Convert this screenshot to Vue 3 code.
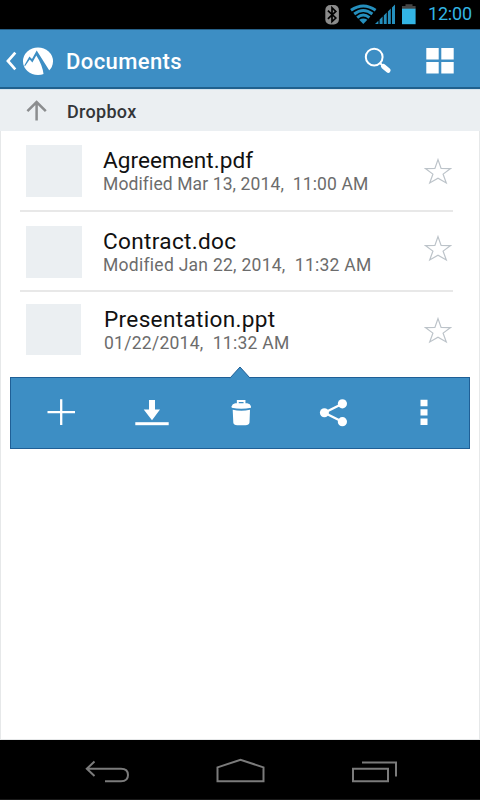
<script setup>
const files = [
  { name: 'Agreement.pdf', detail: 'Modified Mar 13, 2014,\u00a0 11:00 AM', key: 'first' },
  { name: 'Contract.doc', detail: 'Modified Jan 22, 2014,\u00a0 11:32 AM', key: 'second' },
  { name: 'Presentation.ppt', detail: '01/22/2014,\u00a0 11:32 AM', key: 'third' },
]
</script>

<template>
  <div class="phone">
    <div class="status">
      <svg class="status-icons" viewBox="320 0 100 29" width="100" height="29">
        <rect x="325.3" y="5" width="13.6" height="19.4" rx="5" fill="#8b8b8b" />
        <path d="M327.9 10.6 L335.8 18 L332 21.6 V7.8 L335.8 11.4 L327.9 18.8" fill="none" stroke="#000" stroke-width="1.7" />
        <g fill="none" stroke="#258fbd" stroke-width="2.9">
          <path d="M351 10.2 Q363.3 1.6 375.6 10.2" />
          <path d="M354.2 14 Q363.3 6.8 372.4 14" />
          <path d="M357.2 17.6 Q363.3 12.4 369.4 17.6" />
        </g>
        <path d="M359.2 19.8 Q363.3 17 367.4 19.8 L363.3 24Z" fill="#258fbd" />
        <path d="M375 24 L378.4 20.7 V24Z M379.6 24 V19.5 L382.6 16.6 V24Z M383.8 24 V15.4 L386.7 12.6 V24Z M387.9 24 V11.4 L390.8 8.6 V24Z M392 24 V7.4 L395 4.6 V24Z" fill="#258fbd" />
        <path d="M402 9 V6 H405.5 V4.3 H412.5 V6 H415.6 V9Z" fill="#454545" />
        <rect x="402" y="8.7" width="13.6" height="15.5" fill="#33b5e5" />
      </svg>
      <span class="clock">12:00</span>
    </div>

    <header class="header">
      <svg viewBox="0 30 56 57" width="56" height="57">
        <path d="M15.3 52.6 L7.9 61 L15.3 69.4" fill="none" stroke="#fff" stroke-width="2.7" />
        <ellipse cx="38" cy="61.2" rx="15" ry="13.8" fill="#fff" />
        <path d="M24.4 65.3 L29.4 56.6 L32 59 L36.7 50.4 L49.8 71.2 L43.8 75.4 Q42.7 65 36.3 55.4 L32.4 62.6 L29.7 59.6 L24.8 66.5Z" fill="#3d8ec4" />
      </svg>
      <h1 class="heading">Documents</h1>
      <svg class="header-actions" viewBox="355 30 110 57" width="110" height="57">
        <circle cx="374.2" cy="57.1" r="8.4" fill="none" stroke="#fff" stroke-width="2" />
        <path d="M380 63 L384 67" stroke="#fff" stroke-width="2" />
        <path d="M383.4 66.4 L388.2 70.4" stroke="#fff" stroke-width="4.8" stroke-linecap="round" />
        <path d="M426.3 48 H438.7 V59.5 H426.3Z M441.3 48 H453.7 V59.5 H441.3Z M426.3 62 H438.7 V73.5 H426.3Z M441.3 62 H453.7 V73.5 H441.3Z" fill="#fff" />
      </svg>
    </header>

    <div class="crumb">
      <svg viewBox="20 90 36 40" width="36" height="40">
        <path d="M36.6 120.4 V102 M27.4 111.2 L36.6 102 L45.8 111.2" fill="none" stroke="#8b8d8f" stroke-width="2.5" />
      </svg>
      <span class="crumb-name">Dropbox</span>
    </div>

    <main class="content">
      <ul class="files">
        <li v-for="file in files" :key="file.key" class="file" :class="file.key">
          <div class="thumb"></div>
          <div class="info">
            <div class="name">{{ file.name }}</div>
            <div class="detail">{{ file.detail }}</div>
          </div>
          <svg class="star" viewBox="0 0 28 27" width="28" height="27">
            <path d="M14 1.6 L17.1 10.4 L26.6 10.6 L19.1 16.1 L22.3 25 L14 20.3 L5.7 25 L8.9 16.1 L1.4 10.6 L10.9 10.4Z" fill="none" stroke="#bcc3c9" stroke-width="1.2" />
          </svg>
        </li>
      </ul>

      <div class="actions">
        <svg class="pointer" viewBox="0 0 22 13" width="22" height="13">
          <path d="M1 12 L11 1 L21 12 V13 H1Z" fill="#3d8ec4" />
          <path d="M0 11.6 H1.4 L11 1 L20.6 11.6 H22" fill="none" stroke="#1f5f96" stroke-width="1" />
        </svg>
        <svg viewBox="14 397 91 32" width="91" height="32">
          <path d="M61.2 399.3 V425 M47.5 412.2 H75" stroke="#fff" stroke-width="2.3" />
        </svg>
        <svg viewBox="105 397 91 32" width="91" height="32">
          <path d="M149 400 H155 V409.6 H160 L152 420.2 L143.7 409.6 H149Z" fill="#fff" />
          <rect x="135.3" y="422.2" width="33.4" height="3" fill="#fff" />
        </svg>
        <svg viewBox="196 397 91 32" width="91" height="32">
          <path d="M237.8 404 V401 H244.5 V404" fill="none" stroke="#fff" stroke-width="1.9" />
          <path d="M231.7 406.3 Q232.2 404 235.2 403.3 H247.3 Q250.3 404 251 406.3 V407.7 Q241.3 410 231.7 407.7Z" fill="#fff" />
          <path d="M232.7 409.8 Q241.3 411.6 250 409.8 L249.5 422.6 Q249 425.2 245.5 425.2 H237.2 Q233.6 425.2 233.3 422.6Z" fill="#fff" />
        </svg>
        <svg viewBox="287 397 91 32" width="91" height="32">
          <path d="M342.4 403.8 L324.4 412.8 L342.4 421.7" fill="none" stroke="#fff" stroke-width="2.3" />
          <circle cx="324.4" cy="412.8" r="4.5" fill="#fff" />
          <circle cx="342.4" cy="403.8" r="4.6" fill="#fff" />
          <circle cx="342.4" cy="421.7" r="4.6" fill="#fff" />
        </svg>
        <svg viewBox="378 397 91 32" width="91" height="32">
          <path d="M420.5 399.8 H427.5 V406.2 H420.5Z M420.5 409.2 H427.5 V415.6 H420.5Z M420.5 418.6 H427.5 V425 H420.5Z" fill="#fff" />
        </svg>
      </div>
    </main>

    <nav class="nav">
      <svg viewBox="80 750 54 40" width="54" height="40">
        <path d="M86.5 768.7 H121 Q128 768.7 128 775 Q128 781.3 121 781.3 H105 M94.5 761.5 L86.8 768.7 L94.5 776" fill="none" stroke="#7b7b7b" stroke-width="2" />
      </svg>
      <svg viewBox="213 750 56 40" width="56" height="40">
        <path d="M217.5 781.3 V767.4 L240.5 759.8 L263.5 767.4 V781.3Z" fill="none" stroke="#7b7b7b" stroke-width="2" />
      </svg>
      <svg viewBox="348 750 54 40" width="54" height="40">
        <path d="M353 768.7 H388 V781.3 H353Z M362 762.4 H396 V776.5" fill="none" stroke="#7b7b7b" stroke-width="2" />
      </svg>
    </nav>
  </div>
</template>

<style>
body {
  margin: 0;
}
</style>

<style scoped>
.phone {
  box-sizing: border-box;
  width: 480px;
  height: 800px;
  display: flex;
  flex-direction: column;
  overflow: hidden;
  background: #fff;
  font-family: Roboto, sans-serif;
}
svg {
  display: block;
  flex: none;
}
.status {
  height: 29px;
  flex: none;
  display: flex;
  background: #000;
}
.status-icons {
  margin-left: 320px;
}
.clock {
  margin-left: 8px;
  font-size: 18px;
  line-height: 28px;
  color: #33b5e5;
  white-space: nowrap;
  letter-spacing: -0.2px;
}
.header {
  box-sizing: border-box;
  height: 61px;
  flex: none;
  display: flex;
  border-top: 1px solid #266088;
  border-bottom: 1px solid #d5e4ee;
  box-shadow: inset 0 -2px #20608d;
  background: #3d8ec4;
}
.heading {
  margin: 0 0 0 10px;
  font-size: 22px;
  font-weight: 500;
  line-height: 63px;
  color: #fff;
  letter-spacing: 0.4px;
}
.header-actions {
  margin-left: auto;
  margin-right: 15px;
}
.crumb {
  height: 41px;
  flex: none;
  display: flex;
  padding-left: 20px;
  background: #ebeff2;
}
.crumb-name {
  margin-left: 11px;
  font-size: 18px;
  font-weight: 500;
  line-height: 43px;
  letter-spacing: 0.3px;
  color: #333538;
}
.content {
  box-sizing: border-box;
  flex: 1;
  border: 1px solid #e6e8e9;
  border-top: 0;
}
.files {
  list-style: none;
  margin: 0;
  padding: 0 26px 0 19px;
}
.file {
  box-sizing: border-box;
  display: flex;
  border-bottom: 2px solid #e8e8e8;
  padding-left: 6px;
}
.first {
  height: 81px;
}
.second {
  height: 80px;
}
.third {
  height: 85px;
  border-bottom: 0;
}
.thumb {
  width: 56px;
  height: 52px;
  margin-top: 14px;
  flex: none;
  background: #ebeff2;
}
.third .thumb {
  width: 55px;
  height: 51px;
  margin-top: 12px;
}
.info {
  margin-left: 21px;
  padding-top: 16px;
  white-space: nowrap;
}
.name {
  font-size: 22.6px;
  line-height: 27px;
  letter-spacing: 0.32px;
  color: #111;
}
.first .name {
  letter-spacing: 0.03px;
}
.detail {
  margin-top: -1px;
  font-size: 17.5px;
  line-height: 22px;
  letter-spacing: 0.27px;
  color: #6c6c6c;
}
.first .detail {
  letter-spacing: 0.11px;
}
.third .info {
  margin-left: 23px;
  padding-top: 14px;
}
.star {
  margin-left: auto;
  margin-right: 1px;
  margin-top: 27px;
}
.second .star {
  margin-top: 23px;
}
.third .star {
  margin-top: 25px;
}
.actions {
  position: relative;
  box-sizing: border-box;
  width: 460px;
  height: 72px;
  margin-left: 9px;
  padding: 0 0 0 3px;
  display: flex;
  align-items: center;
  border: 1px solid #1f5f96;
  background: #3d8ec4;
}
.pointer {
  position: absolute;
  left: 218px;
  top: -12px;
}
.nav {
  box-sizing: border-box;
  height: 60px;
  flex: none;
  display: flex;
  justify-content: space-between;
  align-items: center;
  padding: 0 78px 0 80px;
  background: #000;
  border-bottom: 1px solid #1a1a1a;
}
</style>
